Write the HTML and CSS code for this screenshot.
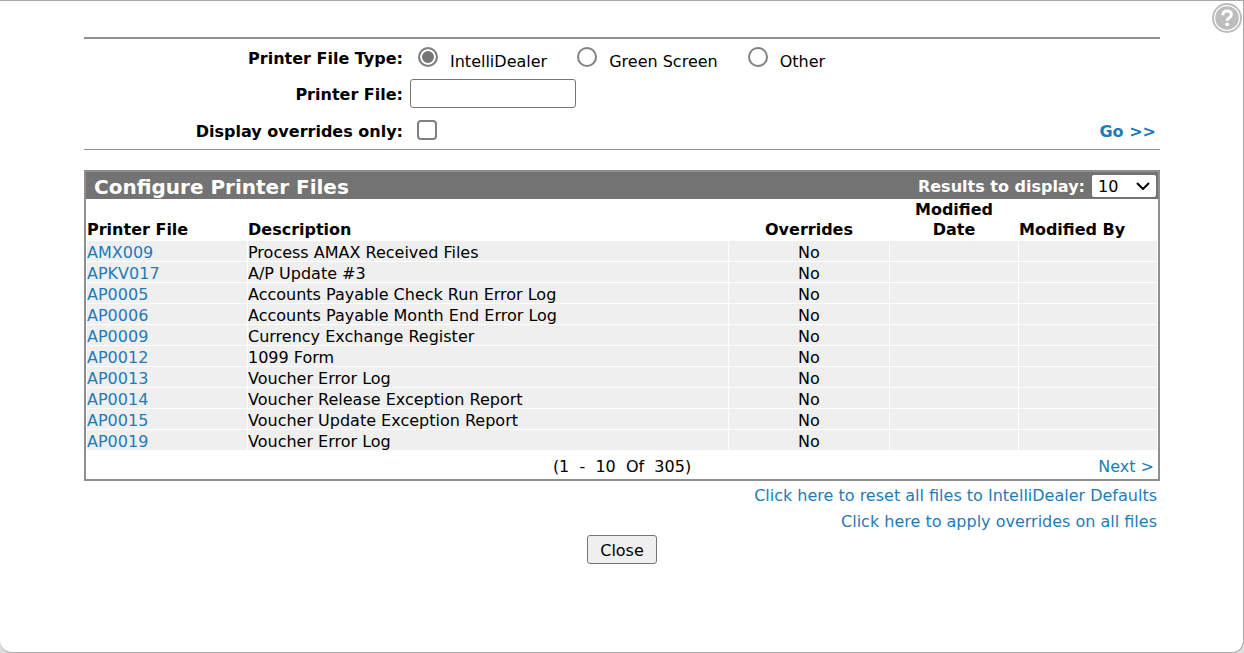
FILE: index.html
```html
<!DOCTYPE html>
<html lang="en">
<head>
<meta charset="utf-8">
<meta name="viewport" content="width=device-width, initial-scale=1">
<title>Configure Printer Files</title>
<link rel="stylesheet" href="styles.css">
</head>

<body>
<div class="dialog">

<a class="help" href="#" aria-label="Help">
  <svg width="32" height="32" viewBox="0 0 32 32" aria-hidden="true">
    <circle cx="16" cy="17" r="14" fill="#fff" stroke="#bdbdbd" stroke-width="2"/>
    <circle cx="16" cy="17" r="11.8" fill="#bdbdbd"/>
    <path d="M11.8 14.2c0-2.8 1.9-4.3 4.3-4.3 2.5 0 4.3 1.5 4.3 3.7 0 3.3-4.2 3-4.2 6.2" fill="none" stroke="#fff" stroke-width="3"/>
    <circle cx="16.2" cy="23.3" r="1.9" fill="#fff"/>
  </svg>
</a>

<div class="content">

<form class="filter">
  <div class="filter-row">
    <span class="filter-label" id="type-label">Printer File Type:</span>
    <div class="options" role="radiogroup" aria-labelledby="type-label">
      <label class="option"><input class="radio" type="radio" name="type" checked><span class="option-text">IntelliDealer</span></label>
      <label class="option"><input class="radio" type="radio" name="type"><span class="option-text">Green Screen</span></label>
      <label class="option"><input class="radio" type="radio" name="type"><span class="option-text">Other</span></label>
    </div>
  </div>
  <div class="filter-row">
    <label class="filter-label" for="printer-file">Printer File:</label>
    <input class="text-box" type="text" id="printer-file">
  </div>
  <div class="filter-row filter-row-last">
    <label class="filter-label" for="overrides">Display overrides only:</label>
    <input class="check" type="checkbox" id="overrides">
    <a class="go" href="#">Go &gt;&gt;</a>
  </div>
</form>

<div class="panel">
  <div class="panel-head">
    <h1 class="panel-title">Configure Printer Files</h1>
    <label class="results-label" for="results">Results to display:</label>
    <div class="select-wrap">
      <select class="select" id="results">
        <option>10</option>
        <option>25</option>
        <option>50</option>
      </select>
      <svg class="select-arrow" width="14" height="8" viewBox="0 0 14 8" aria-hidden="true"><path d="M1 1l6 6 6-6" fill="none" stroke="#000" stroke-width="2"/></svg>
    </div>
  </div>

  <table class="files">
    <colgroup>
      <col class="col-file">
      <col class="col-desc">
      <col class="col-over">
      <col class="col-date">
      <col class="col-by">
    </colgroup>
    <thead>
      <tr><th>Printer File</th><th>Description</th><th class="center">Overrides</th><th class="center">Modified<br>Date</th><th>Modified By</th></tr>
    </thead>
    <tbody>
      <tr><td><a href="#">AMX009</a></td><td>Process AMAX Received Files</td><td class="center">No</td><td></td><td></td></tr>
      <tr><td><a href="#">APKV017</a></td><td>A/P Update #3</td><td class="center">No</td><td></td><td></td></tr>
      <tr><td><a href="#">AP0005</a></td><td>Accounts Payable Check Run Error Log</td><td class="center">No</td><td></td><td></td></tr>
      <tr><td><a href="#">AP0006</a></td><td>Accounts Payable Month End Error Log</td><td class="center">No</td><td></td><td></td></tr>
      <tr><td><a href="#">AP0009</a></td><td>Currency Exchange Register</td><td class="center">No</td><td></td><td></td></tr>
      <tr><td><a href="#">AP0012</a></td><td>1099 Form</td><td class="center">No</td><td></td><td></td></tr>
      <tr><td><a href="#">AP0013</a></td><td>Voucher Error Log</td><td class="center">No</td><td></td><td></td></tr>
      <tr><td><a href="#">AP0014</a></td><td>Voucher Release Exception Report</td><td class="center">No</td><td></td><td></td></tr>
      <tr><td><a href="#">AP0015</a></td><td>Voucher Update Exception Report</td><td class="center">No</td><td></td><td></td></tr>
      <tr><td><a href="#">AP0019</a></td><td>Voucher Error Log</td><td class="center">No</td><td></td><td></td></tr>
    </tbody>
  </table>

  <div class="pager">
    <span class="pager-count">(1 &nbsp;- &nbsp;10 &nbsp;Of &nbsp;305)</span>
    <a class="pager-next" href="#">Next &gt;</a>
  </div>
</div>

<div class="links">
  <a href="#">Click here to reset all files to IntelliDealer Defaults</a>
  <a href="#">Click here to apply overrides on all files</a>
</div>

<div class="buttons">
  <button class="button" type="button">Close</button>
</div>

</div>
</div>
</body>
</html>
```

FILE: styles.css
```css
* {
  box-sizing: border-box;
}

body {
  margin: 0;
  background-color: #dcdcdc;
  color: #000;
  font-family: Verdana, "DejaVu Sans", sans-serif;
  font-size: 16px;
  line-height: 20px;
}

a {
  color: #1f7bb6;
  text-decoration: none;
}

a:hover {
  text-decoration: underline;
}

input, select, button {
  margin: 0;
  font: inherit;
  color: inherit;
}

.dialog {
  position: relative;
  min-height: 100vh;
  padding: 36px 83px 0 84px;
  background-color: #fff;
  border: 1px solid #a8a8a8;
  border-left: none;
  border-radius: 0 0 12px 12px;
}

.help {
  position: absolute;
  top: 0;
  right: 0;
  height: 32px;
}

/* search form */
.filter {
  border-top: 2px solid #8f8f8f;
  border-bottom: 1px solid #8f8f8f;
}

.filter-row {
  display: flex;
  align-items: center;
  height: 36px;
}

.filter-row-last {
  height: 38px;
}

.filter-label {
  width: 319px;
  padding-top: 4px;
  font-weight: bold;
  text-align: right;
}

.options {
  display: flex;
  gap: 30px;
  padding-left: 15px;
}

.option {
  display: flex;
  align-items: center;
  gap: 12px;
}

.option-text {
  padding-top: 10px;
}

.radio {
  appearance: none;
  width: 20px;
  height: 20px;
  border: 2px solid #808080;
  border-radius: 50%;
  background-color: #fff;
}

.radio:checked {
  background-color: #767676;
  box-shadow: inset 0 0 0 2px #fff;
}

.text-box {
  width: 166px;
  height: 29px;
  margin-left: 7px;
  padding: 2px 4px;
  background-color: #fff;
  border: 1px solid #767676;
  border-radius: 3px;
}

.check {
  appearance: none;
  width: 20px;
  height: 20px;
  margin-left: 14px;
  background-color: #fff;
  border: 2px solid #808080;
  border-radius: 4px;
}

.check:checked {
  background-color: #767676;
}

.go {
  margin-left: auto;
  padding: 4px 4px 0 0;
  font-weight: bold;
}

/* results */
.panel {
  margin-top: 20px;
  border: 2px solid #8f8f8f;
}

.panel-head {
  display: flex;
  align-items: center;
  height: 27px;
  padding: 0 2px 0 8px;
  background-color: #737373;
  color: #fff;
}

.panel-title {
  margin: 0 auto 0 0;
  padding-top: 2px;
  font-size: 20px;
  line-height: 24px;
}

.results-label {
  padding-top: 2px;
  font-weight: bold;
}

.select-wrap {
  position: relative;
  display: flex;
  margin-left: 7px;
}

.select {
  appearance: none;
  width: 64px;
  height: 22px;
  padding: 2px 6px 0;
  background-color: #fff;
  border: none;
  border-radius: 2px;
  color: #000;
}

.select-arrow {
  position: absolute;
  top: 7px;
  right: 6px;
  pointer-events: none;
}

.files {
  width: 100%;
  table-layout: fixed;
  border-collapse: separate;
  border-spacing: 1px;
}

.col-file, .col-over {
  width: 160px;
}

.col-date {
  width: 128px;
}

.col-by {
  width: 138px;
}

.files th, .files td {
  height: 20px;
  padding: 0;
  text-align: left;
}

.files th {
  vertical-align: bottom;
}

.files td {
  padding-top: 4px;
  background-color: #efefef;
  line-height: 16px;
}

.files .center {
  text-align: center;
}

.pager {
  position: relative;
  padding: 6px 4px 2px;
  text-align: center;
}

.pager-next {
  position: absolute;
  right: 4px;
}

.links {
  display: flex;
  flex-direction: column;
  align-items: flex-end;
  gap: 6px;
  padding: 5px 3px 0 0;
}

.buttons {
  display: flex;
  justify-content: center;
  margin-top: 3px;
}

.button {
  width: 70px;
  height: 29px;
  padding: 3px 0 0;
  background-color: #efefef;
  border: 1px solid #767676;
  border-radius: 3px;
}
```
